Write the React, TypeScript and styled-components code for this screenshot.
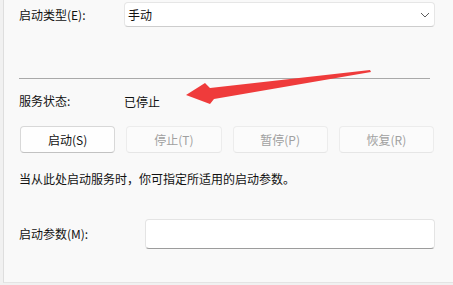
import React from "react";
import styled, { createGlobalStyle } from "styled-components";

const GlobalStyle = createGlobalStyle`
    html, body {
        margin: 0;
        padding: 0;
        background: #f1f1f1;
    }
    body {
        font-family: "Noto Sans CJK SC", "Noto Sans", sans-serif;
        font-size: 12px;
        color: #111111;
    }
`;

const Page = styled.div`
    position: relative;
    width: 453px;
    height: 285px;
    overflow: hidden;
    background: #f1f1f1;
`;

const Panel = styled.div`
    margin-left: 3px;
    height: 283px;
    padding: 2px 18px 0 15px;
    box-sizing: border-box;
    background: #f9f9f9;
    border-left: 1px solid #dedede;
    border-bottom: 1px solid #e4e4e4;
    display: flex;
    flex-direction: column;
`;

const Row = styled.div<{ $height: number; $top?: number }>`
    display: flex;
    align-items: center;
    height: ${(p) => p.$height}px;
    margin-top: ${(p) => p.$top ?? 0}px;
`;

const Label = styled.div<{ $width: number }>`
    width: ${(p) => p.$width}px;
    flex-shrink: 0;
    line-height: 20px;
`;

const Select = styled.div`
    flex: 1;
    height: 100%;
    box-sizing: border-box;
    display: flex;
    align-items: center;
    justify-content: space-between;
    padding: 0 4px 0 3px;
    background: #ffffff;
    border: 1px solid #e6e6e6;
    border-bottom-color: #cdcdcd;
    border-radius: 4px;
`;

const TextBox = styled.div`
    flex: 1;
    height: 100%;
    box-sizing: border-box;
    background: #ffffff;
    border: 1px solid #e4e4e4;
    border-bottom-color: #9c9c9c;
    border-radius: 4px;
`;

const Divider = styled.div`
    height: 1px;
    background: #a9a9a9;
    margin: 51px 5px 0 0;
`;

const ButtonRow = styled.div`
    display: grid;
    grid-template-columns: repeat(4, 1fr);
    column-gap: 11px;
    height: 27px;
    margin: 15px 1px 0 1px;
`;

const Button = styled.div<{ $disabled?: boolean }>`
    display: flex;
    align-items: center;
    justify-content: center;
    box-sizing: border-box;
    border-radius: 4px;
    background: ${(p) => (p.$disabled ? "#fbfbfb" : "#fefefe")};
    border: 1px solid ${(p) => (p.$disabled ? "#ececec" : "#d8d8d8")};
    border-bottom-color: ${(p) => (p.$disabled ? "#e6e6e6" : "#c2c2c2")};
    color: ${(p) => (p.$disabled ? "#a0a0a0" : "#111111")};
`;

const Hint = styled.div`
    margin-top: 16px;
    line-height: 20px;
`;

const Overlay = styled.svg`
    position: absolute;
    left: 0;
    top: 0;
    pointer-events: none;
`;

const Chevron = () => (
    <svg width="10" height="6" viewBox="0 0 10 6">
        <path d="M1 1 L5 5 L9 1" fill="none" stroke="#5c5c5c" strokeWidth="1" />
    </svg>
);

const App = () => {
    return (
        <Page>
            <GlobalStyle />
            <Panel>
                <Row $height={25}>
                    <Label $width={105}>启动类型(E):</Label>
                    <Select>
                        <span>手动</span>
                        <Chevron />
                    </Select>
                </Row>
                <Divider />
                <Row $height={20} $top={12}>
                    <Label $width={105}>服务状态:</Label>
                    <span>已停止</span>
                </Row>
                <ButtonRow>
                    <Button>启动(S)</Button>
                    <Button $disabled>停止(T)</Button>
                    <Button $disabled>暂停(P)</Button>
                    <Button $disabled>恢复(R)</Button>
                </ButtonRow>
                <Hint>当从此处启动服务时，你可指定所适用的启动参数。</Hint>
                <Row $height={30} $top={30}>
                    <Label $width={126}>启动参数(M):</Label>
                    <TextBox />
                </Row>
            </Panel>
            <Overlay width="453" height="285" viewBox="0 0 453 285">
                <polygon
                    points="186,95 205,83 210,88 370,70 371,72 214,99 210,104"
                    fill="#ef3b3b"
                />
            </Overlay>
        </Page>
    );
};

export default App;
